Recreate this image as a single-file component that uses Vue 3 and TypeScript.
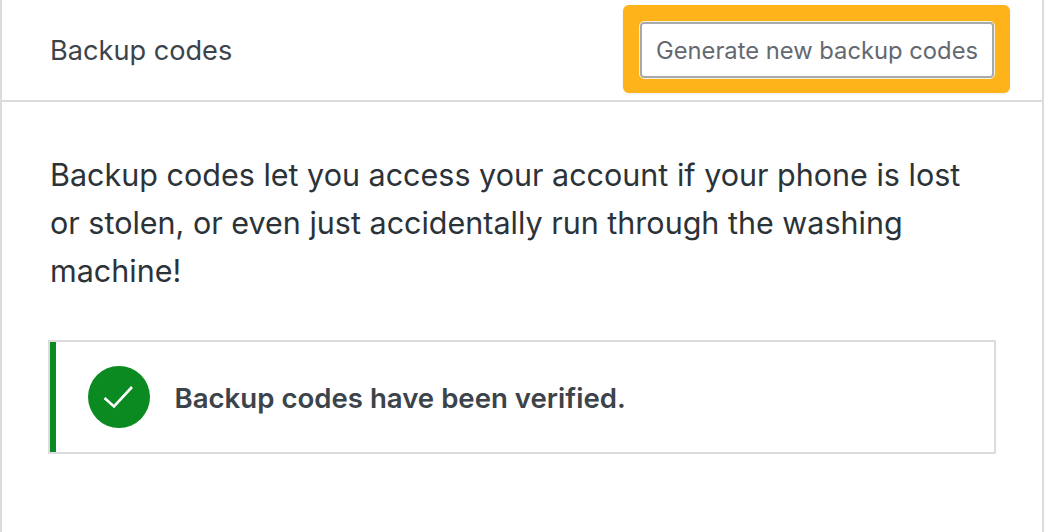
<script setup lang="ts">
const title = 'Backup codes'
</script>
<template>
  <div class="card">
    <header class="head">
      <span class="title">{{ title }}</span>
      <div class="ring"><button class="btn">Generate new backup codes</button></div>
    </header>
    <div class="body">
      <p class="desc">Backup codes let you access your account if your phone is lost or stolen, or even just accidentally run through the washing machine!</p>
      <div class="notice">
        <div class="inner">
          <div class="icon">
            <svg width="62" height="62" viewBox="0 0 62 62"><path d="M16.5 32L26 40.5L44 21" fill="none" stroke="#fff" stroke-width="2.6"/></svg>
          </div>
          <span class="msg">Backup codes have been verified.</span>
        </div>
      </div>
    </div>
  </div>
</template>
<style>
html, body { margin: 0; background: #fff; }
</style>
<style scoped>
.card { width: 1044px; height: 532px; box-sizing: border-box; border-left: 2px solid #dcdcde; border-right: 2px solid #dcdcde; font-family: Inter, "Liberation Sans", sans-serif; color: #3c434a; overflow: hidden; }
.head { height: 102px; box-sizing: border-box; border-bottom: 2px solid #dcdcde; display: flex; align-items: center; justify-content: space-between; padding: 0 32px 0 48px; }
.title { font-size: 27.15px; color: #3c434a; }
.ring { background: #ffb31a; border-radius: 6px; padding: 17px 16px 15px 17px; display: flex; margin-top: -2px; box-shadow: 0 1px 3px rgba(0,0,0,.08); }
.btn { width: 354px; height: 56px; box-sizing: border-box; background: #fff; border: 2px solid #a7aaad; border-radius: 4px; outline: 1px solid #f7f0dd; font: inherit; font-size: 23.75px; color: #646970; padding: 0; }
.body { padding: 49px 46px 0; }
.desc { margin: 0 0 0 2px; font-size: 30.5px; line-height: 48px; color: #2c3338; }
.notice { margin-top: 45px; height: 114px; box-sizing: border-box; border: 2px solid #dcdcde; display: flex; }
.inner { flex: 1; border-left: 6px solid #0a8a20; display: flex; align-items: center; padding-left: 32px; }
.icon { width: 62px; height: 62px; border-radius: 50%; background: #0a8a20; display: flex; }
.msg { margin: 2px 0 0 24.5px; font-size: 27.6px; font-weight: 600; }
</style>
